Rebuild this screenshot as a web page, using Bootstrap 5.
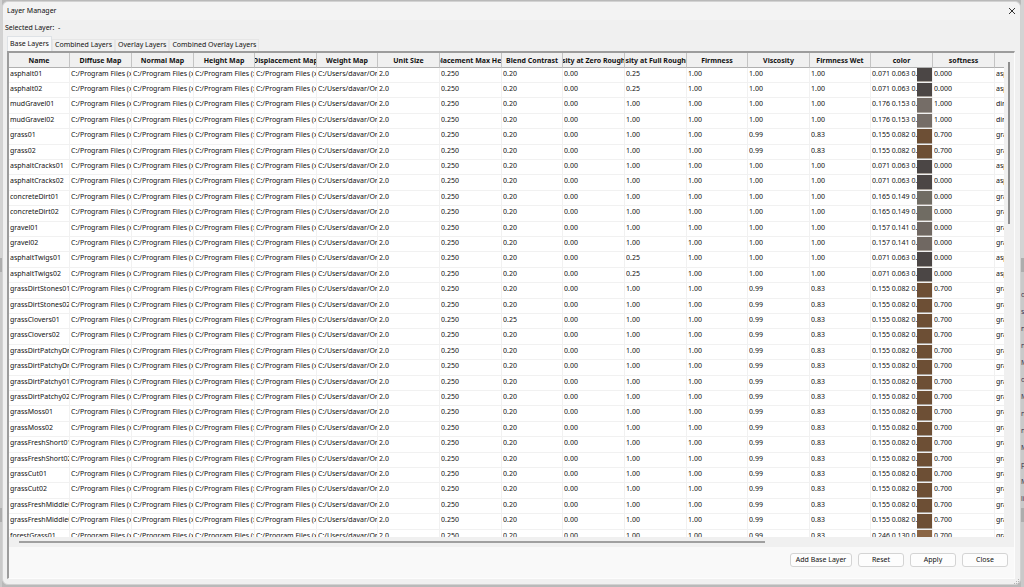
<!DOCTYPE html>
<html lang="en">
<head>
<meta charset="utf-8">
<meta name="viewport" content="width=device-width, initial-scale=1">
<title>Layer Manager</title>
<link href="https://cdn.jsdelivr.net/npm/bootstrap@5.3.0/dist/css/bootstrap.min.css" rel="stylesheet">
<style>
  body { font-family: "Noto Sans", "Open Sans", sans-serif; font-size: 7px; line-height: 15px; color: #111; background: #b9b9b9; }
  .edge { flex: 0 0 3px; overflow: hidden; background: #c9c9c9; line-height: 17px; color: #3b3450; white-space: nowrap; }
  .edge-left { flex-basis: 2px; }
  .edge-gap { height: 258px; background: #d3d3d3; }
  .edge-band { height: 14px; background: #adadad; }
  .edge-list { height: 236px; padding-top: 14px; }
  .dialog-window { background: #f0f0f0; border: 1px solid #d2d2d2; border-radius: 6px; margin: 1px 0 2px; min-width: 0; }
  .title-strip { height: 18px; background: #f3f3f3; padding: 0 3px 0 4px; border-radius: 6px 6px 0 0; }
  .title-strip h1 { font-size: 7px; line-height: 18px; font-weight: 400; }
  .close-x { border: 0; background: none; padding: 0; width: 10px; height: 14px; }
  .close-x svg, .grip { display: block; }
  .selected-line { height: 16px; line-height: 16px; padding-left: 2px; }
  .nav-tabs.layer-tabs { border: 0; padding-left: 4px; height: 15px; align-items: flex-end; }
  .layer-tabs .nav-link { border: 1px solid #e6e6e6; border-bottom: 0; border-radius: 0; padding: 0 2px; color: #111; height: 12px; line-height: 10px; margin: 0; white-space: nowrap; }
  .layer-tabs .nav-link.active { background: #f9f9f9; height: 15px; line-height: 13px; color: #111; }
  .pane { margin: 0 5px 0 4px; border-top: 2px solid #9c9c9c; border-left: 2px solid #9c9c9c; border-right: 1px solid #fdfdfd; border-bottom: 1px solid #fdfdfd; background: #f9f9f9; min-height: 0; }
  .grid-clip { min-width: 0; background: #fff; }
  .grid-area { min-height: 0; }
  .layers { table-layout: fixed; width: 100%; border-collapse: separate; border-spacing: 0; }
  .w-a { width: 61px; }
  .w-b { width: 62px; }
  .layers th { height: 15px; background: #f0f0f0; border-right: 1px solid #c4c4c4; border-bottom: 1px solid #b0b0b0; padding: 0; overflow: hidden; }
  .layers th div { display: flex; justify-content: center; height: 14px; line-height: 16px; font-weight: 700; white-space: nowrap; }
  .layers td { height: 15px; line-height: 11px; padding: 0 0 0 1px; overflow: hidden; white-space: nowrap; border-right: 1px solid #f1f1f1; border-bottom: 1px solid #f1f1f1; vertical-align: top; }
  .layers tbody tr:nth-child(5n+3) td, .layers tbody tr:nth-child(5n) td { height: 16px; }
  .layers th:last-child, .layers td:last-child { border-right: 0; }
  .layers td div { overflow: hidden; }
  .swatch { flex: 0 0 15px; height: 14px; border-bottom: 1px solid #a9a39c; }
  .layers tbody tr:nth-child(5n+3) .swatch, .layers tbody tr:nth-child(5n) .swatch { height: 15px; }
  .v-track { flex: 0 0 10px; background: #f0f0f0; padding-top: 9px; }
  .v-thumb { width: 2px; height: 34%; margin-left: 4px; background: #8e8e8e; }
  .h-track { flex: 0 0 10px; background: #f0f0f0; padding: 4px 0 0 10px; }
  .h-thumb { width: 75%; height: 2px; background: #a0a0a0; }
  .actions { flex: 0 0 31px; padding: 6px 6px 0 0; gap: 6px; }
  .actions .btn { font-size: 7px; line-height: 12px; height: 14px; padding: 0; width: 46px; border: 1px solid #d4d4d4; border-radius: 3px; background: #fdfdfd; color: #111; }
  .actions .btn.wide { width: 62px; }
  .foot { flex: 0 0 5px; }
</style>
</head>
<body class="vh-100 overflow-hidden d-flex">
<div class="edge edge-left" aria-hidden="true">
  <div class="edge-gap"></div><div class="edge-band"></div><div class="edge-list"></div><div class="edge-band"></div>
</div>
<main class="dialog-window flex-grow-1 d-flex flex-column">
  <header class="title-strip d-flex justify-content-between align-items-center">
    <h1 class="m-0">Layer Manager</h1>
    <button class="close-x" type="button" aria-label="Close window">
      <svg width="10" height="14" viewBox="0 0 10 14"><path d="M2 4l6 6M8 4l-6 6" stroke="#333" stroke-width="1" fill="none"/></svg>
    </button>
  </header>
  <div class="selected-line">Selected Layer:&nbsp; -</div>
  <ul class="nav nav-tabs layer-tabs">
    <li class="nav-item"><a class="nav-link active" href="#base">Base Layers</a></li>
    <li class="nav-item"><a class="nav-link" href="#combined">Combined Layers</a></li>
    <li class="nav-item"><a class="nav-link" href="#overlay">Overlay Layers</a></li>
    <li class="nav-item"><a class="nav-link" href="#combined-overlay">Combined Overlay Layers</a></li>
  </ul>
  <section class="pane flex-grow-1 d-flex flex-column" id="base">
    <div class="grid-area flex-grow-1 d-flex">
      <div class="grid-clip flex-grow-1 overflow-hidden">
        <table class="layers">
          <colgroup>
            <col class="w-a"><col class="w-b"><col class="w-b"><col class="w-a"><col class="w-b"><col class="w-a"><col class="w-b"><col class="w-b">
            <col class="w-a"><col class="w-b"><col class="w-b"><col class="w-a"><col class="w-b"><col class="w-a"><col class="w-b"><col class="w-b"><col>
          </colgroup>
          <thead><tr id="heads"></tr></thead>
          <tbody id="rows"></tbody>
        </table>
      </div>
      <div class="v-track"><div class="v-thumb"></div></div>
    </div>
    <div class="h-track"><div class="h-thumb"></div></div>
    <div class="actions d-flex justify-content-end">
      <button class="btn wide" type="button">Add Base Layer</button>
      <button class="btn" type="button">Reset</button>
      <button class="btn" type="button">Apply</button>
      <button class="btn" type="button">Close</button>
    </div>
  </section>
  <div class="foot d-flex justify-content-end"><svg class="grip" width="6" height="5" viewBox="0 0 6 5" fill="#b5b5b5"><path d="M4 0h1v1H4zM2 2h1v1H2zM4 2h1v1H4zM0 4h1v1H0zM2 4h1v1H2zM4 4h1v1H4z"/></svg></div>
</main>
<div class="edge" aria-hidden="true">
  <div class="edge-gap"></div><div class="edge-band"></div>
  <div class="edge-list">o<br>s<br>n<br>n<br>M<br>o<br>M<br>n<br>n<br>M<br>p<br>M<br>li</div>
  <div class="edge-band"></div>
</div>
<script src="https://cdn.jsdelivr.net/npm/bootstrap@5.3.0/dist/js/bootstrap.bundle.min.js"></script>
<script>
  const heads = ["Name", "Diffuse Map", "Normal Map", "Height Map", "Displacement Map", "Weight Map", "Unit Size",
    "Displacement Max Height", "Blend Contrast", "Porosity at Zero Roughness", "Porosity at Full Roughness", "Firmness", "Viscosity",
    "Firmness Wet", "color", "softness", ""];
  // full roughness, viscosity, firmness wet, colour, swatch, softness, material
  const kinds = {
    asphalt:  ["0.25", "1.00", "1.00", "0.071 0.063 0.063", "#4b4645", "0.000", "asphalt"],
    cracks:   ["1.00", "1.00", "1.00", "0.071 0.063 0.063", "#4b4645", "0.000", "asphalt"],
    mud:      ["1.00", "1.00", "1.00", "0.176 0.153 0.141", "#756d67", "1.000", "dirt"],
    concrete: ["1.00", "1.00", "1.00", "0.165 0.149 0.129", "#706c63", "0.000", "gravel"],
    gravel:   ["1.00", "1.00", "1.00", "0.157 0.141 0.129", "#706862", "0.000", "gravel"],
    grass:    ["1.00", "0.99", "0.83", "0.155 0.082 0.037", "#6d4f35", "0.700", "grass"],
    forest:   ["1.00", "0.99", "0.83", "0.246 0.130 0.059", "#8a6544", "0.700", "grass"]
  };
  const layers = [["asphalt01", "asphalt"], ["asphalt02", "asphalt"], ["mudGravel01", "mud"], ["mudGravel02", "mud"],
    ["grass01", "grass"], ["grass02", "grass"], ["asphaltCracks01", "cracks"], ["asphaltCracks02", "cracks"],
    ["concreteDirt01", "concrete"], ["concreteDirt02", "concrete"], ["gravel01", "gravel"], ["gravel02", "gravel"],
    ["asphaltTwigs01", "asphalt"], ["asphaltTwigs02", "asphalt"], ["grassDirtStones01", "grass"], ["grassDirtStones02", "grass"],
    ["grassClovers01", "grass"], ["grassClovers02", "grass"], ["grassDirtPatchyDry01", "grass"], ["grassDirtPatchyDry02", "grass"],
    ["grassDirtPatchy01", "grass"], ["grassDirtPatchy02", "grass"], ["grassMoss01", "grass"], ["grassMoss02", "grass"],
    ["grassFreshShort01", "grass"], ["grassFreshShort02", "grass"], ["grassCut01", "grass"], ["grassCut02", "grass"],
    ["grassFreshMiddle01", "grass"], ["grassFreshMiddle02", "grass"], ["forestGrass01", "forest"]];
  document.getElementById("heads").innerHTML = heads.map(h => `<th scope="col"><div>${h}</div></th>`).join("");
  const file = "C:/Program Files (x";
  document.getElementById("rows").innerHTML = layers.map(([name, kind]) => {
    const k = kinds[kind];
    const blend = name === "grassClovers01" ? "0.25" : "0.20";
    const plain = [name, file, file, file, file, "C:/Users/davar/Or", "2.0", "0.250", blend, "0.00", k[0], "1.00", k[1], k[2]];
    return "<tr>" + plain.map(t => `<td><div>${t}</div></td>`).join("") +
      `<td><div class="d-flex"><div class="flex-grow-1">${k[3]}</div><div class="swatch" style="background:${k[4]}"></div></div></td>` +
      `<td><div>${k[5]}</div></td><td><div>${k[6]}</div></td></tr>`;
  }).join("");
</script>
</body>
</html>
